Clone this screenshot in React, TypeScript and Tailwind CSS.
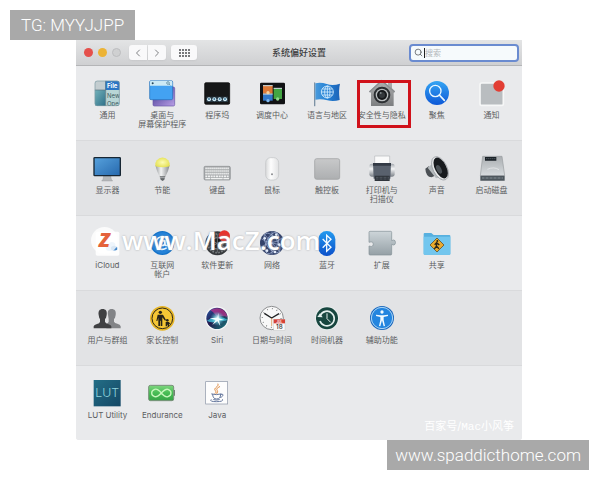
import type { ReactNode } from 'react'
import { AtSign, ChevronLeft, ChevronRight, Search } from 'lucide-react'

type Pane = {
  label: string
  icon: ReactNode
  highlighted?: boolean
}

function Icon({ children }: { children: ReactNode }) {
  return (
    <svg viewBox="0 0 84 84" className="h-7 w-7 shrink-0 overflow-visible" aria-hidden="true">
      {children}
    </svg>
  )
}

const GeneralIcon = () => (
  <Icon>
    <defs>
      <linearGradient id="general-teal" x1="0" y1="0" x2="1" y2="1">
        <stop offset="0" stopColor="#74b3bb" />
        <stop offset="1" stopColor="#2d6f88" />
      </linearGradient>
      <clipPath id="general-clip">
        <rect x="5" y="5" width="75" height="76" rx="7" />
      </clipPath>
    </defs>
    <g clipPath="url(#general-clip)">
      <rect x="5" y="5" width="75" height="76" fill="#c3cdd0" />
      <rect x="5" y="33" width="33" height="48" fill="url(#general-teal)" />
      <rect x="38" y="33" width="42" height="48" fill="#b9d6d6" />
      <rect x="37" y="5" width="43" height="28" fill="#2b76c5" />
      <g fontFamily="Inter, sans-serif">
        <text x="42" y="27" fontSize="18" fontWeight="700" fill="#fff">File</text>
        <text x="42" y="56" fontSize="18" fill="#3c5860">New</text>
        <text x="42" y="81" fontSize="18" fill="#3c5860">Ope</text>
      </g>
      <path d="M5 33h33M38 5v76" stroke="#55717d" strokeWidth="2" />
    </g>
    <rect x="6" y="6" width="73" height="74" rx="7" fill="none" stroke="#7b9aa5" strokeWidth="2" />
  </Icon>
)

const DesktopIcon = () => (
  <Icon>
    <defs>
      <linearGradient id="desk-purple" x1="0" y1="0" x2="1" y2="1">
        <stop offset="0" stopColor="#40348f" />
        <stop offset="1" stopColor="#b9a0e6" />
      </linearGradient>
    </defs>
    <rect x="15" y="24" width="65" height="57" rx="4" fill="url(#desk-purple)" stroke="#6656a8" strokeWidth="2" />
    <rect x="5" y="5" width="69" height="57" rx="4" fill="#43a2f2" stroke="#236eb8" strokeWidth="2" />
    <path d="M6 9q0-4 4-4h59q4 0 4 4v11H6z" fill="#cdeaf5" />
    <circle cx="14" cy="13" r="3" fill="#29485c" />
    <circle cx="60" cy="12" r="4" fill="none" stroke="#47758c" strokeWidth="2" />
    <path d="m63 15 4 4" stroke="#47758c" strokeWidth="2" />
  </Icon>
)

const DockIcon = () => (
  <Icon>
    <rect x="5" y="11" width="75" height="65" rx="4" fill="#161718" stroke="#050505" strokeWidth="2" />
    <rect x="10" y="53" width="65" height="16" fill="#273843" />
    {[18, 34, 50, 66].map((cx) => (
      <g key={cx}>
        <circle cx={cx} cy="61" r="6" fill="#d4edf7" />
        <circle cx={cx} cy="60" r="3" fill="#417a9b" />
      </g>
    ))}
  </Icon>
)

const MissionIcon = () => (
  <Icon>
    <rect x="6" y="11" width="75" height="65" rx="4" fill="#111214" />
    <rect x="15" y="20" width="29" height="24" fill="#dc7836" />
    <rect x="15" y="45" width="29" height="20" fill="#3278c9" />
    <rect x="47" y="28" width="25" height="32" fill="#43a543" />
    <path d="M15 20h29M15 45h29M47 28h25" stroke="#d6e4e9" strokeWidth="3" />
    <circle cx="30" cy="41" r="5" fill="#f4cf9b" />
    <circle cx="30" cy="65" r="5" fill="#7fb8ee" />
    <circle cx="59" cy="60" r="5" fill="#8fd98a" />
  </Icon>
)

const FlagIcon = () => (
  <Icon>
    <defs>
      <linearGradient id="flag-blue" x1="0" y1="0" x2="1" y2="0">
        <stop offset="0" stopColor="#4a9bdc" />
        <stop offset=".5" stopColor="#2280d5" />
        <stop offset="1" stopColor="#1c63b7" />
      </linearGradient>
    </defs>
    <path d="M5 12v68" stroke="#7d92a5" strokeWidth="4" strokeLinecap="round" />
    <path d="M7 13q16-4 34 2t40-1q-5 20-1 49-19 6-37 1T7 62z" fill="url(#flag-blue)" />
    <g fill="none" stroke="#d8efff" strokeWidth="2.5">
      <circle cx="43" cy="39" r="18" />
      <ellipse cx="43" cy="39" rx="8" ry="18" />
      <path d="M43 21v36M25 39h36M28 30h30M28 48h30" />
    </g>
  </Icon>
)

const SecurityIcon = () => (
  <Icon>
    <defs>
      <linearGradient id="house-metal" x1="0" y1="0" x2="0" y2="1">
        <stop offset="0" stopColor="#b0b1b2" />
        <stop offset="1" stopColor="#7c7e80" />
      </linearGradient>
    </defs>
    <path d="M41 4 60 18V9h12v19l9 9-4 5v39H9V42l-5-5z" fill="url(#house-metal)" />
    <path d="M4 39 41 5l39 34" fill="none" stroke="#8b8e91" strokeWidth="4" />
    <circle cx="42" cy="48" r="25" fill="#2c2f32" />
    <circle cx="42" cy="48" r="19" fill="#b9bdbf" />
    <circle cx="42" cy="48" r="15" fill="#17191c" />
    <circle cx="42" cy="48" r="9" fill="#33373b" />
    <circle cx="38" cy="42" r="3" fill="#7d8589" />
  </Icon>
)

const SpotlightIcon = () => (
  <Icon>
    <defs>
      <linearGradient id="spotlight-blue" x1="0" y1="0" x2="0" y2="1">
        <stop offset="0" stopColor="#35a5f3" />
        <stop offset="1" stopColor="#0d58d7" />
      </linearGradient>
    </defs>
    <circle cx="42" cy="42" r="36" fill="url(#spotlight-blue)" />
    <circle cx="37" cy="36" r="17" fill="none" stroke="#e9f7ff" strokeWidth="4" />
    <path d="m49 48 15 16" stroke="#e9f7ff" strokeWidth="5" strokeLinecap="round" />
  </Icon>
)

const NotificationsIcon = () => (
  <Icon>
    <rect x="6" y="12" width="70" height="67" rx="5" fill="#b9bdc0" stroke="#f6f7f7" strokeWidth="5" />
    <circle cx="63" cy="21" r="17" fill="#e23e34" />
  </Icon>
)

const DisplayIcon = () => (
  <Icon>
    <defs>
      <linearGradient id="display-blue" x1="0" y1="0" x2="1" y2="1">
        <stop offset="0" stopColor="#57a2dd" />
        <stop offset="1" stopColor="#2668ad" />
      </linearGradient>
    </defs>
    <path d="M32 65h21l2 11 4 5H26l4-5z" fill="#b5b8ba" stroke="#8b8e91" strokeWidth="1" />
    <rect x="3" y="11" width="79" height="54" rx="2" fill="url(#display-blue)" stroke="#172633" strokeWidth="4" />
  </Icon>
)

const EnergyIcon = () => (
  <Icon>
    <defs>
      <radialGradient id="bulb-glow">
        <stop offset="0" stopColor="#fdfcb4" />
        <stop offset="1" stopColor="#e6e35a" />
      </radialGradient>
      <linearGradient id="bulb-base" x1="0" y1="0" x2="1" y2="0">
        <stop offset="0" stopColor="#96999b" />
        <stop offset=".4" stopColor="#f2f3f3" />
        <stop offset="1" stopColor="#85888b" />
      </linearGradient>
    </defs>
    <path d="M22 34q3 15 13 34h17q10-18 13-34z" fill="url(#bulb-base)" />
    <path d="M22 37a22 22 0 1 1 43 0q-21 6-43 0z" fill="url(#bulb-glow)" />
    <path d="M35 67h17l-3 10-5 4-6-4z" fill="#63676a" />
    <path d="M35 71h16" stroke="#d0d2d4" strokeWidth="2" />
  </Icon>
)

const KeyboardIcon = () => (
  <Icon>
    <rect x="3" y="37" width="79" height="41" rx="4" fill="#a6a9ab" stroke="#8b8e91" strokeWidth="2" />
    <g stroke="#f0f1f1" strokeWidth="5">
      <path d="M7 43h71M7 51h71M7 59h71" strokeDasharray="4.5 1.5" />
      <path d="M7 67h71" strokeDasharray="6 2" />
      <path d="M7 74h15M24 74h35M61 74h17" strokeWidth="4" />
    </g>
  </Icon>
)

const MouseIcon = () => (
  <Icon>
    <defs>
      <linearGradient id="mouse-body" x1="0" y1="0" x2="1" y2="0">
        <stop offset="0" stopColor="#d9dadb" />
        <stop offset=".4" stopColor="#fdfdfd" />
        <stop offset="1" stopColor="#e1e2e3" />
      </linearGradient>
    </defs>
    <rect x="23" y="11" width="39" height="67" rx="15" fill="url(#mouse-body)" stroke="#c0c2c4" strokeWidth="2" />
    <circle cx="42" cy="61" r="3" fill="#8b8d90" />
  </Icon>
)

const TrackpadIcon = () => (
  <Icon>
    <defs>
      <linearGradient id="pad-body" x1="0" y1="0" x2="0" y2="1">
        <stop offset="0" stopColor="#c8c9ca" />
        <stop offset="1" stopColor="#adafb1" />
      </linearGradient>
    </defs>
    <rect x="5" y="14" width="75" height="62" rx="6" fill="url(#pad-body)" stroke="#989b9d" strokeWidth="2" />
  </Icon>
)

const PrinterIcon = () => (
  <Icon>
    <defs>
      <linearGradient id="printer-side" x1="0" y1="0" x2="0" y2="1">
        <stop offset="0" stopColor="#a2a7ad" />
        <stop offset=".4" stopColor="#f4f5f6" />
        <stop offset="1" stopColor="#7c8289" />
      </linearGradient>
    </defs>
    <rect x="4" y="29" width="76" height="39" rx="7" fill="url(#printer-side)" />
    <path d="M20 6h45v24H20z" fill="#fafafa" stroke="#b6b9bd" strokeWidth="2" />
    <path d="M15 28h54l-2 46H17z" fill="#59616d" />
    <path d="M15 27h54v8H15z" fill="#333a45" />
    <path d="M20 65h45v16H20z" fill="#30353c" />
    <path d="M24 70h38M24 75h38" stroke="#79828d" strokeWidth="2" strokeDasharray="2 2" />
  </Icon>
)

const SoundIcon = () => (
  <Icon>
    <path d="m7 44 10-7 22 27-13 6q-18-2-19-26z" fill="#4b5055" />
    <path d="m14 41 14-12 23 41-12 3z" fill="#b5babd" />
    <ellipse cx="51" cy="43" rx="21" ry="38" transform="rotate(-27 51 43)" fill="#e6e8e9" stroke="#90959a" strokeWidth="2" />
    <ellipse cx="53" cy="42" rx="17" ry="34" transform="rotate(-27 53 42)" fill="#181b1e" />
    <ellipse cx="48" cy="46" rx="7" ry="14" transform="rotate(-27 48 46)" fill="#4b5156" />
  </Icon>
)

const DiskIcon = () => (
  <Icon>
    <defs>
      <linearGradient id="disk-body" x1="0" y1="0" x2="0" y2="1">
        <stop offset="0" stopColor="#aaaeb1" />
        <stop offset="1" stopColor="#d7dbde" />
      </linearGradient>
    </defs>
    <path d="M14 7h58l8 58H7z" fill="url(#disk-body)" stroke="#999da0" strokeWidth="2" />
    <path d="M7 65h73v15H7z" fill="#4d565d" />
    <path d="M21 9h34v11H21z" fill="#1b2228" />
    <path d="M25 14h27" stroke="#89949c" strokeWidth="2" strokeDasharray="3 3" />
    <path d="M12 72h63" stroke="#a4afb5" strokeWidth="3" strokeDasharray="2 2" />
    <path d="M28 46q20-9 35 1" fill="none" stroke="#eef0f1" strokeWidth="2" />
  </Icon>
)

const CloudIcon = () => (
  <Icon>
    <rect x="8" y="8" width="71" height="72" rx="5" fill="#fdfdfd" />
    <path d="M39 61q-4-12 8-13 3-12 14-8 8 4 6 11 8 2 6 8t-10 6H46q-6 0-7-4z" fill="#a9cdee" />
    <path d="M55 62q-4-9 5-11 8-3 11 5 5 6-3 8H58z" fill="#4788ca" />
  </Icon>
)

const InternetIcon = () => (
  <Icon>
    <circle cx="43" cy="42" r="36" fill="#1573c9" />
    <circle cx="43" cy="42" r="32" fill="#2482d8" />
    <AtSign x="20" y="19" width="46" height="46" color="#eaf7ff" strokeWidth={2.5} />
  </Icon>
)

const UpdateIcon = () => (
  <Icon>
    <circle cx="43" cy="43" r="36" fill="#36393c" />
    <circle cx="43" cy="43" r="28" fill="none" stroke="#787d80" strokeWidth="5" strokeDasharray="5 4" />
    <circle cx="43" cy="43" r="17" fill="#17191b" stroke="#888d90" strokeWidth="3" />
    <path d="M43 15v56M18 31l50 25M18 56l50-26" stroke="#686d70" strokeWidth="3" />
    <circle cx="64" cy="21" r="17" fill="#e5332d" />
  </Icon>
)

const NetworkIcon = () => (
  <Icon>
    <circle cx="42" cy="42" r="36" fill="#34436b" />
    <g fill="none" stroke="#a7b7d8" strokeWidth="2">
      <ellipse cx="42" cy="42" rx="17" ry="34" transform="rotate(24 42 42)" />
      <ellipse cx="42" cy="42" rx="17" ry="34" transform="rotate(-35 42 42)" />
      <path d="M10 29q30 25 64-3M9 54q34-24 66 1M42 7v70M19 16l47 53" />
    </g>
    {['20 28', '55 17', '64 47', '38 43', '27 65', '51 69'].map((p) => {
      const [cx, cy] = p.split(' ')
      return <circle key={p} cx={cx} cy={cy} r="4" fill="#e3ecfb" />
    })}
  </Icon>
)

const BluetoothIcon = () => (
  <Icon>
    <defs>
      <linearGradient id="bt-blue" x1="0" y1="0" x2="0" y2="1">
        <stop offset="0" stopColor="#249aef" />
        <stop offset="1" stopColor="#0b50ca" />
      </linearGradient>
    </defs>
    <rect x="16" y="6" width="51" height="75" rx="25" fill="url(#bt-blue)" />
    <path d="m29 30 25 25-13 12V19l13 12-25 25" fill="none" stroke="#f3faff" strokeWidth="4" />
  </Icon>
)

const ExtensionsIcon = () => (
  <Icon>
    <defs>
      <linearGradient id="puzzle" x1="0" y1="0" x2="0" y2="1">
        <stop offset="0" stopColor="#cdd5d9" />
        <stop offset="1" stopColor="#95a0a6" />
      </linearGradient>
    </defs>
    <path
      d="M6 7h62q3 0 3 3v25q6-4 10 0 3 6 0 11-4 4-10 0v29q0 3-3 3H6q-3 0-3-3V51q8 3 11 0 4-6 0-11-4-3-11 0V10q0-3 3-3z"
      fill="url(#puzzle)"
      stroke="#829096"
      strokeWidth="2"
    />
  </Icon>
)

const SharingIcon = () => (
  <Icon>
    <path d="M2 15q0-3 3-3h20l7 6h47q3 0 3 3v54q0 2-3 2H5q-3 0-3-3z" fill="#57b0df" />
    <path d="M2 23h80v52q0 2-3 2H5q-3 0-3-3z" fill="#72c6ee" />
    <path d="m42 27 21 21-21 21-21-21z" fill="#eaaa2e" stroke="#4c3b19" strokeWidth="2" />
    <circle cx="43" cy="36" r="3" fill="#29251c" />
    <path d="m42 40-2 12-6 8m6-9 8 8m-13-12 6-6 8 7" fill="none" stroke="#29251c" strokeWidth="4" />
  </Icon>
)

const UsersIcon = () => (
  <Icon>
    <path
      d="M45 33c-2-12 2-18 11-18s14 6 12 18q-1 9-5 12v8q2 5 10 6 9 2 10 8v6H40V59q6-1 7-6v-8z"
      fill="#828487"
    />
    <path
      d="M17 33c-2-12 3-18 12-18s14 6 12 18q-1 9-5 12v8q2 5 9 7 9 2 10 7v6H2v-6q1-5 10-7 8-2 9-7v-8q-3-3-4-12z"
      fill="#404143"
    />
  </Icon>
)

const ParentalIcon = () => (
  <Icon>
    <circle cx="43" cy="43" r="37" fill="#e6b527" />
    <circle cx="43" cy="43" r="31" fill="#f4c635" stroke="#302918" strokeWidth="3" />
    <g fill="#25221a">
      <circle cx="37" cy="25" r="5" />
      <path d="M29 32h16l9 16-3 2-8-10v26h-5V50h-2v16h-5V41l-3 10h-3z" />
      <circle cx="58" cy="49" r="4" />
      <path d="M53 54h10l4 7-4-1v7h-4v-5h-2v5h-4z" />
    </g>
  </Icon>
)

const SiriIcon = () => (
  <Icon>
    <defs>
      <linearGradient id="siri-bg" x1="0" y1="0" x2="1" y2="1">
        <stop offset="0" stopColor="#2a5fae" />
        <stop offset=".45" stopColor="#241a4c" />
        <stop offset="1" stopColor="#17807f" />
      </linearGradient>
      <radialGradient id="siri-glow">
        <stop offset="0" stopColor="#fff" />
        <stop offset=".35" stopColor="#9be8f0" stopOpacity=".8" />
        <stop offset="1" stopColor="#3cc4d8" stopOpacity="0" />
      </radialGradient>
    </defs>
    <circle cx="42" cy="43" r="36" fill="#f5f5f7" />
    <circle cx="42" cy="43" r="32" fill="url(#siri-bg)" />
    <path d="M22 19q20-12 40 0 10 10 11 20-18-8-31 3-5-14-20-23z" fill="#b8358f" opacity=".75" />
    <path d="M12 50q18-14 30-6 14-8 31 3-12 8-28 1-16 12-33 2z" fill="#40c8df" opacity=".75" />
    <circle cx="43" cy="44" r="22" fill="url(#siri-glow)" />
    <path d="m43 41 3-15 1 17 17 5-16 1 4 18-9-16-15 12 10-15-18-5z" fill="#f2ffff" />
  </Icon>
)

const ClockIcon = () => (
  <Icon>
    <circle cx="41" cy="42" r="35" fill="#f8f8f8" stroke="#8b8d8f" strokeWidth="3" />
    <circle cx="41" cy="42" r="28" fill="none" stroke="#55585a" strokeWidth="4" strokeDasharray="2 12.66" />
    <path d="m19 28 22 14 22-13" fill="none" stroke="#202224" strokeWidth="4" />
    <path d="M41 42v24" stroke="#d5863d" strokeWidth="2" />
    <rect x="47" y="46" width="34" height="33" fill="#fafafa" stroke="#b8b8b8" />
    <rect x="47" y="46" width="34" height="12" fill="#d64238" />
    <g fontFamily="Inter, sans-serif" textAnchor="middle">
      <text x="64" y="56" fontSize="9" fontWeight="700" fill="#fff">JUL</text>
      <text x="64" y="76" fontSize="19" fontWeight="500" fill="#333">18</text>
    </g>
  </Icon>
)

const TimeMachineIcon = () => (
  <Icon>
    <circle cx="42" cy="43" r="36" fill="#e9eeee" />
    <circle cx="42" cy="43" r="33" fill="#17463f" />
    <path d="M22 34a22 22 0 1 1-1 17" fill="none" stroke="#e2eeec" strokeWidth="5" />
    <path d="m13 39 8-11 8 12z" fill="#e2eeec" />
    <path d="M42 28v16l11 11" fill="none" stroke="#e2eeec" strokeWidth="3" />
  </Icon>
)

const AccessibilityIcon = () => (
  <Icon>
    <circle cx="42" cy="42" r="36" fill="#1866bc" />
    <circle cx="42" cy="42" r="32" fill="#2385df" stroke="#afd9f8" strokeWidth="3" />
    <circle cx="42" cy="24" r="5" fill="#f4fbff" />
    <path
      d="m24 32 13 2h10l13-2v4l-13 3v9l4 18-4 1-5-18-5 18-4-1 4-18v-9l-13-3z"
      fill="#f4fbff"
    />
  </Icon>
)

const LutIcon = () => (
  <Icon>
    <defs>
      <linearGradient id="lut-bg" x1="0" y1="0" x2="1" y2="1">
        <stop offset="0" stopColor="#236e86" />
        <stop offset="1" stopColor="#144765" />
      </linearGradient>
    </defs>
    <rect x="2" y="3" width="81" height="79" fill="url(#lut-bg)" />
    <text x="7" y="55" fontFamily="Inter, sans-serif" fontSize="37" fontWeight="300" fill="#8fd3dd">LUT</text>
  </Icon>
)

const EnduranceIcon = () => (
  <Icon>
    <defs>
      <linearGradient id="battery" x1="0" y1="0" x2="0" y2="1">
        <stop offset="0" stopColor="#7fd67f" />
        <stop offset=".5" stopColor="#47bd54" />
        <stop offset="1" stopColor="#36a346" />
      </linearGradient>
    </defs>
    <path d="M77 33h4v17h-4z" fill="#6e8270" />
    <rect x="2" y="19" width="75" height="46" rx="5" fill="url(#battery)" stroke="#7a917b" strokeWidth="3" />
    <path
      d="M40 42C31 31 26 29 20 31c-12 4-12 18 0 22 7 2 12-2 20-11s13-13 20-11c12 4 12 18 0 22-6 2-11 0-20-11z"
      fill="none"
      stroke="#c8f7bd"
      strokeWidth="4"
    />
  </Icon>
)

const JavaIcon = () => (
  <Icon>
    <rect x="8" y="8" width="66" height="67" fill="#fdfdfd" stroke="#8a94a5" strokeWidth="2" />
    <g fill="none" strokeLinecap="round">
      <path d="M45 15c4 9-15 11-8 20 4 5 2 7-1 8M50 23c-10 5-10 8-7 12 2 4 0 7-2 9" stroke="#df8a3e" strokeWidth="3" />
      <path d="M26 45q14 4 28 0M29 46q0 14 12 14 12 0 12-14M54 46q10-2 4 6-2 3-6 3" stroke="#65779d" strokeWidth="3" />
      <path d="M24 62q-6 6 16 6 22 0 19-6M32 62q8 3 17 0" stroke="#65779d" strokeWidth="3" />
    </g>
  </Icon>
)

const ROWS: Pane[][] = [
  [
    { label: '通用', icon: <GeneralIcon /> },
    { label: '桌面与\n屏幕保护程序', icon: <DesktopIcon /> },
    { label: '程序坞', icon: <DockIcon /> },
    { label: '调度中心', icon: <MissionIcon /> },
    { label: '语言与地区', icon: <FlagIcon /> },
    { label: '安全性与隐私', icon: <SecurityIcon />, highlighted: true },
    { label: '聚焦', icon: <SpotlightIcon /> },
    { label: '通知', icon: <NotificationsIcon /> },
  ],
  [
    { label: '显示器', icon: <DisplayIcon /> },
    { label: '节能', icon: <EnergyIcon /> },
    { label: '键盘', icon: <KeyboardIcon /> },
    { label: '鼠标', icon: <MouseIcon /> },
    { label: '触控板', icon: <TrackpadIcon /> },
    { label: '打印机与\n扫描仪', icon: <PrinterIcon /> },
    { label: '声音', icon: <SoundIcon /> },
    { label: '启动磁盘', icon: <DiskIcon /> },
  ],
  [
    { label: 'iCloud', icon: <CloudIcon /> },
    { label: '互联网\n帐户', icon: <InternetIcon /> },
    { label: '软件更新', icon: <UpdateIcon /> },
    { label: '网络', icon: <NetworkIcon /> },
    { label: '蓝牙', icon: <BluetoothIcon /> },
    { label: '扩展', icon: <ExtensionsIcon /> },
    { label: '共享', icon: <SharingIcon /> },
  ],
  [
    { label: '用户与群组', icon: <UsersIcon /> },
    { label: '家长控制', icon: <ParentalIcon /> },
    { label: 'Siri', icon: <SiriIcon /> },
    { label: '日期与时间', icon: <ClockIcon /> },
    { label: '时间机器', icon: <TimeMachineIcon /> },
    { label: '辅助功能', icon: <AccessibilityIcon /> },
  ],
  [
    { label: 'LUT Utility', icon: <LutIcon /> },
    { label: 'Endurance', icon: <EnduranceIcon /> },
    { label: 'Java', icon: <JavaIcon /> },
  ],
]

function PaneButton({ label, icon, highlighted }: Pane) {
  return (
    <button type="button" className="relative flex min-w-0 flex-col items-center">
      {icon}
      <span className="mt-1 whitespace-pre text-center text-[8px] leading-[9px] text-[#5c5e61]">
        {label}
      </span>
      {highlighted && (
        <span className="absolute -right-0.5 left-[3px] top-px h-12 border-3 border-[#d0121b]" />
      )}
    </button>
  )
}

function Toolbar() {
  return (
    <header className="grid h-[26px] grid-cols-[1fr_auto_1fr] items-center border-b border-[#b4b5b7] bg-linear-to-b from-[#e3e4e5] to-[#cfd0d2] px-[3px]">
      <div className="flex items-center pl-[5px]">
        <div className="flex gap-[5px]">
          <button type="button" aria-label="关闭" className="h-[9px] w-[9px] rounded-full bg-[#e5504b]" />
          <button type="button" aria-label="最小化" className="h-[9px] w-[9px] rounded-full bg-[#ecb335]" />
          <button type="button" aria-label="缩放" className="h-[9px] w-[9px] rounded-full border border-[#bcbdbf] bg-[#cfd0d1]" />
        </div>
        <div className="ml-2 flex gap-px text-[#808285]">
          <button type="button" aria-label="后退" className="flex h-[15px] w-[18px] items-center justify-center rounded-l-[3px] bg-[#f9f9fa] shadow-xs">
            <ChevronLeft className="h-3 w-3" strokeWidth={2} />
          </button>
          <button type="button" aria-label="前进" className="flex h-[15px] w-[18px] items-center justify-center rounded-r-[3px] bg-[#f9f9fa] shadow-xs">
            <ChevronRight className="h-3 w-3" strokeWidth={2} />
          </button>
        </div>
        <button type="button" aria-label="显示全部" className="ml-[5px] flex h-[15px] w-[26px] items-center justify-center rounded-[3px] bg-[#f9f9fa] shadow-xs">
          <svg viewBox="0 0 11 8" className="h-2 w-[11px]" fill="#77787b" aria-hidden="true">
            {[0, 3, 6].map((y) => (
              <path key={y} d={`M0 ${y}h2v2H0zM3 ${y}h2v2H3zM6 ${y}h2v2H6zM9 ${y}h2v2H9z`} />
            ))}
          </svg>
        </button>
      </div>
      <h1 className="text-[9px] font-medium leading-3 text-[#3c3d3f]">系统偏好设置</h1>
      <label className="flex h-[18px] w-[110px] items-center justify-self-end rounded-[4px] border-2 border-[#6a8bd0] bg-[#f6fafc] pl-[3px]">
        <Search className="h-[9px] w-[9px] shrink-0 text-[#515457]" strokeWidth={2} />
        <span className="ml-px h-[10px] w-px shrink-0 bg-[#1e1f21]" />
        <input
          type="text"
          aria-label="搜索"
          placeholder="搜索"
          className="w-full min-w-0 bg-transparent text-[8px] leading-3 outline-none placeholder:text-[#b3b7ba]"
        />
      </label>
    </header>
  )
}

function Watermark() {
  return (
    <div className="pointer-events-none absolute left-[15px] top-2.5 flex items-center gap-1">
      <span className="flex h-[27px] w-[27px] items-center justify-center rounded-full bg-white/80 font-['Open_Sans',sans-serif] text-xl font-extrabold italic leading-none text-[#e4623b]">
        Z
      </span>
      <span className="font-['Open_Sans',sans-serif] text-[26px] font-semibold leading-7 text-white [text-shadow:0_0_2px_#a0a3a7]">
        www.MacZ.com
      </span>
    </div>
  )
}

export default function App() {
  return (
    <div className="flex flex-col bg-white p-2.5 font-[Inter,'Noto_Sans_CJK_SC',sans-serif]">
      <p className="self-start bg-[#a9a9a9] px-[11px] font-[Roboto,sans-serif] text-[17px] font-light leading-[30px] text-white">
        TG: MYYJJPP
      </p>

      <main className="relative ml-[66px] mr-[68px] overflow-hidden rounded-b-[3px] bg-[#e8e8ea]">
        <Toolbar />
        {ROWS.map((panes, index) => (
          <section
            key={panes[0].label}
            className="relative grid min-h-[75px] grid-cols-8 items-start border-b border-[#d9dadc] pl-1 pr-[3px] pt-[13px] last-of-type:min-h-[74px] last-of-type:border-b-0 odd:bg-[#e2e3e5] even:bg-[#e9eaec]"
          >
            {panes.map((pane) => (
              <PaneButton key={pane.label} {...pane} />
            ))}
            {index === 2 && <Watermark />}
          </section>
        ))}
        <p className="absolute bottom-1 right-2 text-[11px] leading-[18px] text-white">
          百家号/<span className="font-['Liberation_Mono',monospace]">Mac</span>小风筝
        </p>
      </main>

      <p className="mr-px self-end bg-[#a9a9a9] px-2 font-[Roboto,sans-serif] text-[17px] font-light leading-[30px] text-white">
        www.spaddicthome.com
      </p>
    </div>
  )
}
